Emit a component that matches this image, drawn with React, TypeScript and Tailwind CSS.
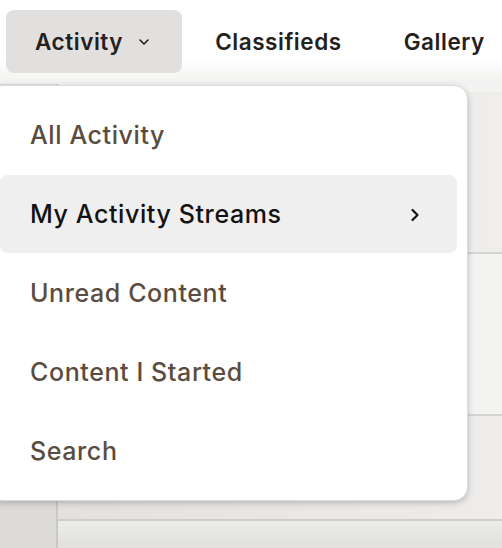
import React from 'react';

const items = ['All Activity', 'My Activity Streams', 'Unread Content', 'Content I Started', 'Search'];

const ChevronDown = () => (
    <svg width="12" height="8" viewBox="0 0 12 8" fill="none" stroke="currentColor" strokeWidth="1.6" strokeLinecap="round" strokeLinejoin="round">
        <path d="M2 2l4 4 4-4" />
    </svg>
);

const ChevronRight = () => (
    <svg width="10" height="14" viewBox="0 0 10 14" fill="none" stroke="currentColor" strokeWidth="2.2" strokeLinecap="round" strokeLinejoin="round">
        <path d="M2.5 2l5 5-5 5" />
    </svg>
);

const navText = 'text-[#24201d] text-[22.5px] font-semibold tracking-[0.55px] whitespace-nowrap';

export default function App() {
    return (
        <div className="relative w-[502px] h-[548px] overflow-hidden bg-white font-['Inter',sans-serif]">
            {/* Top navigation */}
            <nav className="flex items-center gap-[4px] h-[84px] pl-[6px] pb-[1px] bg-gradient-to-b from-white from-70% to-[#f1f1f0]">
                <button className={`flex items-center gap-[15px] h-[63px] pl-[29px] pr-[32px] rounded-[8px] bg-[#e2e0df] ${navText}`}>
                    Activity
                    <ChevronDown />
                </button>
                <button className={`h-[63px] px-[29px] ${navText}`}>Classifieds</button>
                <button className={`h-[63px] px-[29px] ${navText}`}>Gallery</button>
            </nav>

            {/* Page behind the menu */}
            <div className="flex h-[464px] bg-gradient-to-b from-[#f3f3f2] to-[#e4e3e1]">
                <div className="w-[58px] shrink-0 bg-[#dddbd9] border-r-[2px] border-[#cac8c6]" />
                <div className="flex-1 flex flex-col pt-[8px]">
                    <div className="h-[162px] bg-gradient-to-r from-[#e6e4e2] to-[#efeeec] border-b-[2px] border-[#d6d4d2]" />
                    <div className="h-[162px] bg-gradient-to-r from-[#eeedeb] to-[#f3f3f2] border-b-[2px] border-[#d6d4d2]" />
                    <div className="h-[105px] bg-gradient-to-r from-[#e2e1df] to-[#eeedec] border-b-[2px] border-[#cfcdcb]" />
                    <div className="flex-1 bg-gradient-to-b from-[#ebebea] to-[#e2e1e0]" />
                </div>
            </div>

            {/* Activity dropdown */}
            <div className="absolute left-[-11px] top-[85px] w-[479px] rounded-[14px] border border-[#dcdcdc] bg-white p-[10px] shadow-[0_2px_6px_rgba(0,0,0,0.22)]">
                <ul className="flex flex-col gap-[1px]">
                    {items.map((label) => {
                        const active = label === 'My Activity Streams';
                        return (
                            <li
                                key={label}
                                className={
                                    active
                                        ? 'flex items-center justify-between h-[78px] pt-[2px] pl-[30px] pr-[37px] rounded-[8px] bg-[#efefef] text-[#141210] text-[25px] font-medium tracking-[0.6px]'
                                        : 'flex items-center h-[78px] pt-[2px] pl-[30px] text-[#5a4c40] text-[25px] font-medium tracking-[0.6px]'
                                }
                            >
                                {label}
                                {active && <ChevronRight />}
                            </li>
                        );
                    })}
                </ul>
            </div>
        </div>
    );
}
